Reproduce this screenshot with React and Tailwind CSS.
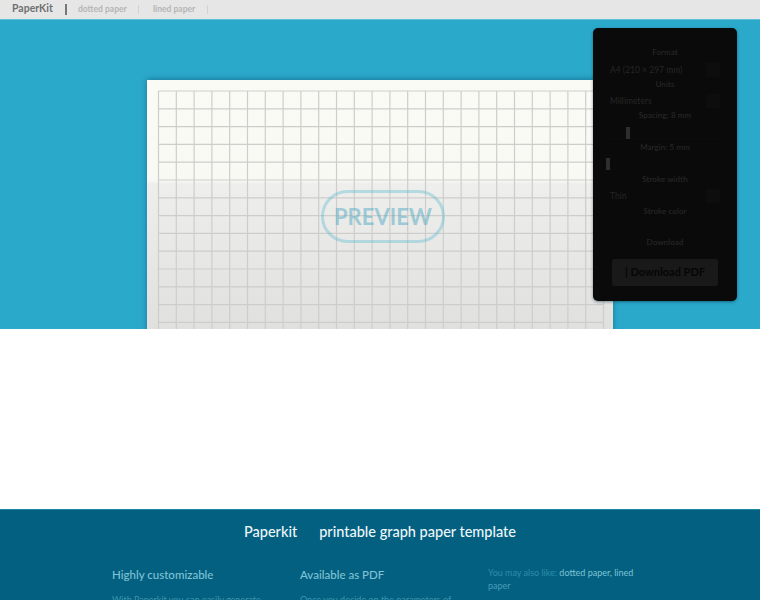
function GridPaper() {
  const cols = Array.from({ length: 26 }, (_, i) => 158.5 + i * 17.8);
  const rows = Array.from({ length: 36 }, (_, i) => 91 + i * 17.8);
  return (
    <svg width="466" height="660" viewBox="147 80 466 660" className="block">
      {cols.map((x) => (
        <line key={x} x1={x} x2={x} y1="91" y2="740" stroke="#cdcdcb" strokeWidth="1.2" />
      ))}
      {rows.map((y) => (
        <line key={y} x1="158" x2="604" y1={y} y2={y} stroke="#cdcdcb" strokeWidth="1.2" />
      ))}
    </svg>
  );
}

function PanelTitle({ children, className = "" }) {
  return <div className={`text-center text-[8px] leading-[14px] text-[#2b2b2b] tracking-[0.1px] ${className}`}>{children}</div>;
}

function SelectRow({ children, className = "" }) {
  return (
    <div className={`flex items-center justify-between h-[18px] pl-[17px] pr-[17px] text-[8.5px] text-[#262626] ${className}`}>
      <span>{children}</span>
      <span className="w-[14px] h-[14px] bg-[#0d0d0d]" />
    </div>
  );
}

function Slider({ offset, className = "" }) {
  return (
    <div className={`relative h-[12px] mx-[13px] border-b border-[#0c0c0c] ${className}`}>
      <span className="absolute top-0 w-[4px] h-[12px] bg-[#2e2e2e]" style={{ left: offset }} />
    </div>
  );
}

export default function App() {
  return (
    <div className="font-['Lato','Liberation_Sans',sans-serif] h-[600px] overflow-hidden bg-white">
      <header className="flex items-center h-[19px] pb-[1px] bg-[#e6e6e6] pl-[12px]">
        <span className="w-[41px] text-[10.5px] font-bold whitespace-nowrap text-[#707070]">PaperKit</span>
        <span className="ml-[12px] w-[2px] h-[11px] bg-[#777777]" />
        <span className="ml-[11px] w-[48px] text-[8.5px] font-bold whitespace-nowrap text-[#b5b5b5]">dotted paper</span>
        <span className="ml-[12px] w-px h-[9px] bg-[#d2d2d2]" />
        <span className="ml-[14px] w-[42px] text-[8.5px] font-bold whitespace-nowrap text-[#b5b5b5]">lined paper</span>
        <span className="ml-[12px] w-px h-[9px] bg-[#d2d2d2]" />
      </header>

      <section className="relative h-[310px] overflow-hidden bg-[#2ba9cb] border-t border-[#5fc0d9]">
        <div className="ml-[147px] mt-[60px] w-[466px] h-[660px] shadow-[0_-1px_6px_rgba(0,60,90,0.45)] bg-[linear-gradient(to_bottom,#fbfbf6_0px,#f9f9f4_100px,#eeeeec_104px,#e0e0de_250px)]">
          <GridPaper />
        </div>

        <div className="absolute left-[321px] top-[170px] flex items-center justify-center w-[124px] h-[53px] rounded-full border-[3px] border-[#62bcd2]/40 text-[22px] font-bold text-[#4fa9c2]/50">
          PREVIEW
        </div>

        <aside className="absolute left-[593px] top-[8px] w-[144px] h-[273px] pt-[17px] rounded-[5px] bg-[#0a0a0a] shadow-[0_1px_3px_rgba(0,40,60,0.5)]">
          <PanelTitle>Format</PanelTitle>
          <SelectRow className="mt-[2px]">A4 (210 × 297 mm)</SelectRow>
          <PanelTitle className="mt-[-2px]">Units</PanelTitle>
          <SelectRow className="mt-[1px]">Millimeters</SelectRow>
          <PanelTitle className="mt-[-2px]">Spacing: 8 mm</PanelTitle>
          <Slider offset={20} className="mt-[5px]" />
          <PanelTitle className="mt-[1px]">Margin: 5 mm</PanelTitle>
          <Slider offset={0} className="mt-[4px]" />
          <PanelTitle className="mt-[2px]">Stroke width</PanelTitle>
          <SelectRow className="mt-[1px]">Thin</SelectRow>
          <PanelTitle className="mt-[-1px]">Stroke color</PanelTitle>
          <div className="h-[17px]" />
          <PanelTitle>Download</PanelTitle>
          <button className="block mt-[10px] ml-[19px] w-[106px] h-[27px] rounded-[2px] bg-[#191919] text-[11px] font-bold text-[#050505]">
            | Download PDF
          </button>
        </aside>
      </section>

      <div className="h-[180px]" />

      <footer className="h-[91px] overflow-hidden bg-[#036081] border-t border-[#1f8aa5]">
        <h1 className="flex justify-center gap-[22px] mt-[12px] text-[14.5px] leading-[20px] font-medium text-[#eef7fa]">
          <span>Paperkit</span>
          <span>printable graph paper template</span>
        </h1>
        <div className="grid grid-cols-[188px_188px_150px] mt-[25px] ml-[112px]">
          <div>
            <h2 className="text-[11.5px] leading-[16px] font-medium text-[#7fc3d5]">Highly customizable</h2>
            <p className="mt-[10px] text-[9px] leading-[14px] text-[#3f93ad]">With Paperkit you can easily generate</p>
          </div>
          <div>
            <h2 className="text-[11.5px] leading-[16px] font-medium text-[#7fc3d5]">Available as PDF</h2>
            <p className="mt-[10px] text-[9px] leading-[14px] text-[#3f93ad]">Once you decide on the parameters of</p>
          </div>
          <p className="mt-[-1px] text-[9px] leading-[13px] text-[#2d8dab]">
            You may also like: <span className="text-[#7fc3d5]">dotted paper, lined</span> <span className="text-[#4a9db8]">paper</span>
          </p>
        </div>
      </footer>
    </div>
  );
}
